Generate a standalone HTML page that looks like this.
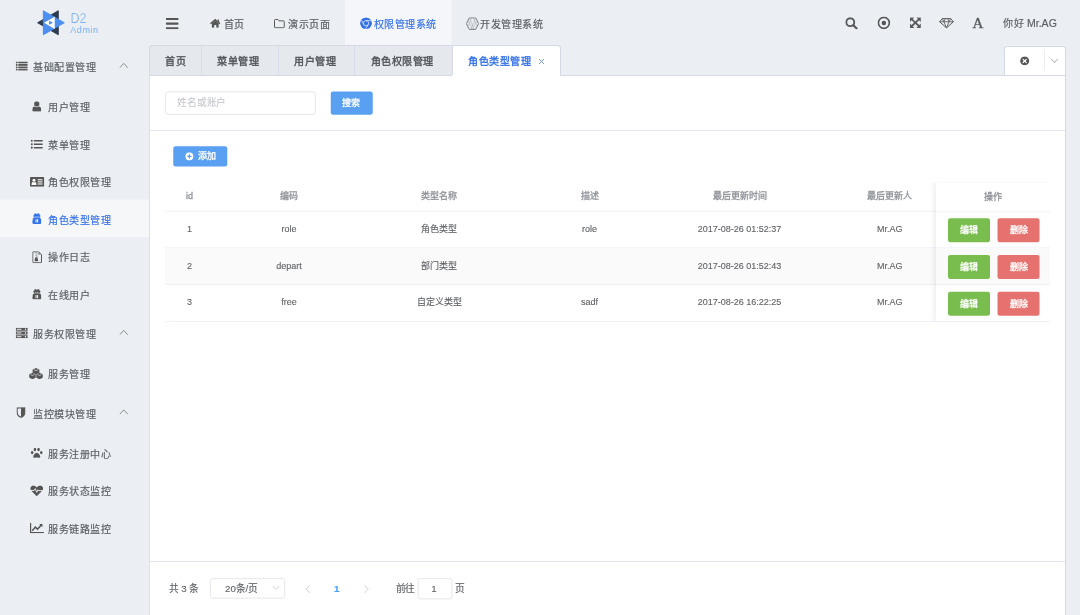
<!DOCTYPE html>
<html lang="zh-CN"><head><meta charset="utf-8">
<style>
html,body{margin:0;padding:0;width:1080px;height:615px;overflow:hidden;background:#ebeff3;}
#root{position:absolute;left:0;top:0;width:1440px;height:820px;transform:scale(0.75);transform-origin:0 0;font-family:"Liberation Sans",sans-serif;color:#606266;background:#ebeff3;filter:grayscale(0.001);}
.abs{position:absolute;}
.c{font-size:calc(1em - 0.6px);letter-spacing:1px;}
.th .c,.td .c,.btn .c,.t14 .c{font-size:1em;letter-spacing:0;}
.t14{-webkit-text-stroke-width:0.15px;font-size:14px;line-height:20px;white-space:nowrap;}
.t12{font-size:12px;line-height:16px;white-space:nowrap;}
.ic{position:absolute;}
/* sidebar */
.mi{position:absolute;left:0;width:200px;height:50px;}
.mi .tx{-webkit-text-stroke-width:0.22px;position:absolute;left:64.5px;top:17.3px;font-size:14px;line-height:20px;white-space:nowrap;color:#5b6066;}
.st{position:absolute;left:0;width:200px;height:56px;}
.st .tx{-webkit-text-stroke-width:0.22px;position:absolute;left:44.4px;top:20.3px;font-size:14px;line-height:20px;white-space:nowrap;color:#5b6066;}
.chev{position:absolute;left:159px;width:12px;height:8px;}
/* header */
.hn{-webkit-text-stroke-width:0.22px;position:absolute;top:22.4px;font-size:14px;line-height:20px;white-space:nowrap;color:#5b6066;}
/* tabs */
.tab{-webkit-text-stroke-width:0.5px;position:absolute;top:60.5px;height:40px;box-sizing:border-box;background:#e5e8ec;font-size:14px;line-height:39px;padding-top:1.5px;text-align:center;color:#4f5359;}
/* panel */
#panel{position:absolute;left:200px;top:100.4px;width:1221px;height:730px;background:#fff;}
.btn{-webkit-text-stroke-width:0.4px;position:absolute;box-sizing:border-box;border-radius:3px;color:#fff;font-size:12px;text-align:center;}
.th{-webkit-text-stroke-width:0.4px;position:absolute;top:252.8px;font-size:12px;line-height:16px;color:#8f9399;white-space:nowrap;transform:translateX(-50%);}
.td{-webkit-text-stroke-width:0.15px;position:absolute;font-size:12px;line-height:16px;color:#5f6266;white-space:nowrap;transform:translateX(-50%);}
.row{position:absolute;left:220px;width:1180px;height:49px;box-sizing:border-box;border-bottom:1px solid #ebeef5;}
</style></head>
<body>
<div id="root">

<!-- ============ HEADER ============ -->
<!-- logo -->
<svg class="ic" style="left:49.33px;top:12.67px" width="40" height="36" viewBox="37 9.5 30 27">
  <path d="M37.9 22.5 L58.5 10.5 L58.5 34.5 Z" fill="#2f3b4f" stroke="#2f3b4f" stroke-width="1" stroke-linejoin="round"/>
  <path d="M43.6 10.5 L64.5 22.5 L43.6 34.5 Z" fill="#4d8ff0" stroke="#4d8ff0" stroke-width="1" stroke-linejoin="round"/>
  <path d="M44.3 22.5 L55 16.4 L55 28.7 Z" fill="#fff"/>
  <path d="M49.3 20.6 L53.3 22.5 L49.3 24.5 Z" fill="#4d8ff0"/>
</svg>
<div class="abs" style="left:94px;top:14.5px;font-size:19.3px;line-height:20px;color:#4d95f2;transform:scaleX(0.87);transform-origin:0 0;-webkit-text-stroke:0.6px #ebeff3">D2</div>
<div class="abs" style="left:93.6px;top:33px;font-size:12.1px;line-height:14px;color:#5b9ef2;letter-spacing:0.75px;-webkit-text-stroke:0.15px #ebeff3">Admin</div>

<!-- hamburger -->
<svg class="ic" style="left:220.5px;top:24px" width="17.5" height="15" viewBox="0 0 17.5 15">
  <rect x="0" y="0" width="17.5" height="2.8" rx="1" fill="#555"/>
  <rect x="0" y="6.1" width="17.5" height="2.8" rx="1" fill="#555"/>
  <rect x="0" y="12.2" width="17.5" height="2.8" rx="1" fill="#555"/>
</svg>
<!-- home -->
<svg class="ic" style="left:279.5px;top:25px" width="14" height="12" viewBox="0 0 14 12">
  <path d="M7 0 L14 6 L12.6 7.4 L7 2.6 L1.4 7.4 L0 6 Z" fill="#555"/>
  <path d="M2.5 6.3 L7 2.6 L11.5 6.3 V12 H8.4 V8.3 H5.6 V12 H2.5 Z" fill="#555"/>
  <rect x="10.3" y="1" width="1.8" height="3" fill="#555"/>
</svg>
<div class="hn" style="left:298.3px"><span class="c">首页</span></div>
<!-- folder -->
<svg class="ic" style="left:365px;top:24.5px" width="15" height="13" viewBox="0 0 15 13">
  <path d="M1 2 Q1 1 2 1 H5.5 L7 2.8 H13 Q14 2.8 14 3.8 V11 Q14 12 13 12 H2 Q1 12 1 11 Z" fill="none" stroke="#555" stroke-width="1.3"/>
</svg>
<div class="hn" style="left:384px"><span class="c">演示页面</span></div>
<!-- active nav -->
<div class="abs" style="left:460px;top:0;width:142px;height:60px;background:#f4f6f9"></div>
<svg class="ic" style="left:479.7px;top:22.9px" width="16" height="16" viewBox="0 0 16 16">
  <circle cx="8" cy="8" r="7.8" fill="#3572e8"/>
  <circle cx="8" cy="8" r="3.4" fill="none" stroke="#fff" stroke-width="1"/>
  <circle cx="8" cy="8" r="2.6" fill="#3572e8"/>
  <path d="M8 4.6 H14.6 M5.1 9.7 L1.8 4 M10.9 9.7 L7.6 15.4" stroke="#fff" stroke-width="0.9" fill="none"/>
</svg>
<div class="hn" style="left:498px;color:#3572e8"><span class="c">权限管理系统</span></div>
<!-- develop -->
<svg class="ic" style="left:621.3px;top:22.6px" width="18" height="17" viewBox="0 0 18 17">
  <path d="M0.8 8.5 L4.8 0.8 H13.2 L17.2 8.5 L13.2 16.2 H4.8 Z" fill="none" stroke="#6e7175" stroke-width="1.2" stroke-linejoin="round"/>
  <path d="M4.8 0.8 L11.2 16.2 M13.2 0.8 L6.8 16.2 M8 0.8 L2.8 12.3 M10 0.8 L15.2 12.3 M2.8 4.7 L9 16.2 M15.2 4.7 L9 16.2" stroke="#9a9da1" stroke-width="0.6" fill="none"/>
</svg>
<div class="hn" style="left:640.1px"><span class="c">开发管理系统</span></div>

<!-- right icons -->
<svg class="ic" style="left:1127px;top:22.5px" width="17" height="16" viewBox="0 0 17 16">
  <circle cx="6.7" cy="6.6" r="5.3" fill="none" stroke="#58595c" stroke-width="2.5"/>
  <path d="M10.6 10.5 L15.2 14.9" stroke="#58595c" stroke-width="2.8" stroke-linecap="round"/>
</svg>
<svg class="ic" style="left:1170px;top:21.5px" width="17" height="17" viewBox="0 0 17 17">
  <circle cx="8.5" cy="8.5" r="7.3" fill="none" stroke="#555" stroke-width="2.2"/>
  <circle cx="8.5" cy="8.5" r="3" fill="#555"/>
</svg>
<svg class="ic" style="left:1212.5px;top:23px" width="15" height="14.5" viewBox="0 0 15 14.5">
  <path d="M0.3 0.3 H6.2 L0.3 6.2 Z M14.7 0.3 V6.2 L8.8 0.3 Z M14.7 14.2 H8.8 L14.7 8.3 Z M0.3 14.2 V8.3 L6.2 14.2 Z" fill="#58595c"/>
  <path d="M2.5 2.5 L12.5 12 M12.5 2.5 L2.5 12" stroke="#58595c" stroke-width="2.3"/>
</svg>
<svg class="ic" style="left:1252px;top:23.5px" width="20" height="14" viewBox="0 0 20 14">
  <path d="M4.5 0.8 H15.5 L19.2 5 L10 13.2 L0.8 5 Z" fill="none" stroke="#555" stroke-width="1.3" stroke-linejoin="round"/>
  <path d="M0.8 5 H19.2 M6.5 5 L10 13 L13.5 5 M4.5 0.8 L6.5 5 L8.5 0.8 M11.5 0.8 L13.5 5 L15.5 0.8" fill="none" stroke="#555" stroke-width="1.1"/>
</svg>
<div class="abs" style="left:1296.5px;top:19.2px;font-family:'Liberation Serif',serif;font-size:20px;line-height:22px;color:#58595c;-webkit-text-stroke:0.5px #58595c">A</div>
<div class="hn" style="left:1337.5px;top:21px"><span class="c">你好</span> Mr.AG</div>

<!-- ============ SIDEBAR ============ -->
<div class="st" style="top:60px">
  <svg class="ic" style="left:21px;top:21.5px" width="16" height="12.5" viewBox="0 0 16 12.5">
    <rect x="0" y="0" width="2.4" height="2.4" fill="#555"/><rect x="3.4" y="0" width="12.6" height="2.4" fill="#555"/>
    <rect x="0" y="3.37" width="2.4" height="2.4" fill="#555"/><rect x="3.4" y="3.37" width="12.6" height="2.4" fill="#555"/>
    <rect x="0" y="6.74" width="2.4" height="2.4" fill="#555"/><rect x="3.4" y="6.74" width="12.6" height="2.4" fill="#555"/>
    <rect x="0" y="10.1" width="2.4" height="2.4" fill="#555"/><rect x="3.4" y="10.1" width="12.6" height="2.4" fill="#555"/>
  </svg>
  <div class="tx"><span class="c">基础配置管理</span></div>
  <svg class="chev" style="top:23px" viewBox="0 0 12 8"><path d="M0.7 7.3 L6 1.5 L11.3 7.3" fill="none" stroke="#777" stroke-width="1.1"/></svg>
</div>
<div class="mi" style="top:116px">
  <svg class="ic" style="left:43px;top:19px" width="12" height="14" viewBox="0 0 12 14">
    <circle cx="6" cy="3.6" r="3.5" fill="#555"/>
    <path d="M0 12.2 Q0 7.6 2.4 7 Q6 9.2 9.6 7 Q12 7.6 12 12.2 Q12 13.6 10.6 13.6 H1.4 Q0 13.6 0 12.2 Z" fill="#555"/>
  </svg>
  <div class="tx"><span class="c">用户管理</span></div>
</div>
<div class="mi" style="top:166px">
  <svg class="ic" style="left:41.2px;top:20px" width="16.3" height="12.5" viewBox="0 0 16.3 12.5">
    <circle cx="1.3" cy="1.6" r="1.4" fill="#555"/><rect x="4" y="0.6" width="12.3" height="2" rx="0.5" fill="#555"/>
    <circle cx="1.3" cy="6.25" r="1.4" fill="#555"/><rect x="4" y="5.25" width="12.3" height="2" rx="0.5" fill="#555"/>
    <circle cx="1.3" cy="10.9" r="1.4" fill="#555"/><rect x="4" y="9.9" width="12.3" height="2" rx="0.5" fill="#555"/>
  </svg>
  <div class="tx"><span class="c">菜单管理</span></div>
</div>
<div class="mi" style="top:216px">
  <svg class="ic" style="left:40px;top:19.5px" width="19" height="13" viewBox="0 0 19 13">
    <rect x="0" y="0" width="19" height="13" rx="1" fill="#555"/>
    <circle cx="5.3" cy="4.3" r="2" fill="#fff"/>
    <path d="M2 10.5 Q2 7 3.6 6.8 Q5.3 7.8 7 6.8 Q8.6 7 8.6 10.5 Z" fill="#fff"/>
    <rect x="10.2" y="3" width="6.5" height="1.4" fill="#fff"/><rect x="10.2" y="5.8" width="6.5" height="1.4" fill="#fff"/><rect x="10.2" y="8.6" width="6.5" height="1.4" fill="#fff"/>
  </svg>
  <div class="tx"><span class="c">角色权限管理</span></div>
</div>
<div class="mi" style="top:266px;background:#f5f7f9">
  <svg class="ic" style="left:42.5px;top:18.3px" width="12.4" height="14.8" viewBox="0 0 12.4 14.8">
    <path d="M1.7 4.4 L2.8 1.5 Q3.2 0 4.6 0.6 L6.2 1.2 L7.8 0.6 Q9.2 0 9.6 1.5 L10.7 4.4 Z" fill="#3572e8"/>
    <rect x="1.2" y="3.3" width="10" height="1.3" rx="0.6" fill="#3572e8"/>
    <rect x="2.4" y="4.4" width="7.6" height="1.8" fill="#3572e8"/>
    <ellipse cx="4.9" cy="5.2" rx="0.95" ry="0.6" fill="#fff"/><ellipse cx="7.5" cy="5.2" rx="0.95" ry="0.6" fill="#fff"/>
    <path d="M1.8 6.2 H10.6 Q12.4 7.6 12.4 12.3 Q12.4 14.8 9.9 14.8 H2.5 Q0 14.8 0 12.3 Q0 7.6 1.8 6.2 Z" fill="#3572e8"/>
    <rect x="4.4" y="8.4" width="1.3" height="4.2" fill="#fff"/><rect x="6.5" y="8.4" width="1.3" height="4.2" fill="#fff"/>
  </svg>
  <div class="tx" style="color:#3572e8"><span class="c">角色类型管理</span></div>
</div>
<div class="mi" style="top:316px">
  <svg class="ic" style="left:42.5px;top:18.8px" width="13" height="16" viewBox="0 0 13 16">
    <path d="M1.2 0.7 H8.6 L12.3 4.4 V14.6 Q12.3 15.3 11.6 15.3 H1.4 Q0.7 15.3 0.7 14.6 V1.4 Q0.7 0.7 1.4 0.7 Z" fill="none" stroke="#555" stroke-width="1.3"/>
    <path d="M8.3 1.6 L11.2 4.4 H8.3 Z" fill="#555"/>
    <rect x="4.3" y="1.5" width="1.6" height="1.4" fill="#888"/><rect x="5.6" y="3.0" width="1.4" height="1.4" fill="#888"/><rect x="4.3" y="4.5" width="1.6" height="1.4" fill="#888"/><rect x="5.6" y="6.0" width="1.4" height="1.4" fill="#888"/>
    <path d="M4.2 8 H6.8 L7.9 12.4 Q7.9 13.4 6.9 13.4 H4 Q3 13.4 3 12.4 Z" fill="#555"/>
  </svg>
  <div class="tx"><span class="c">操作日志</span></div>
</div>
<div class="mi" style="top:366px">
  <svg class="ic" style="left:42.5px;top:18.7px" width="12.4" height="14.8" viewBox="0 0 12.4 14.8">
    <path d="M1.7 4.4 L2.8 1.5 Q3.2 0 4.6 0.6 L6.2 1.2 L7.8 0.6 Q9.2 0 9.6 1.5 L10.7 4.4 Z" fill="#555"/>
    <rect x="1.2" y="3.3" width="10" height="1.3" rx="0.6" fill="#555"/>
    <rect x="2.4" y="4.4" width="7.6" height="1.8" fill="#555"/>
    <ellipse cx="4.9" cy="5.2" rx="0.95" ry="0.6" fill="#fff"/><ellipse cx="7.5" cy="5.2" rx="0.95" ry="0.6" fill="#fff"/>
    <path d="M1.8 6.2 H10.6 Q12.4 7.6 12.4 12.3 Q12.4 14.8 9.9 14.8 H2.5 Q0 14.8 0 12.3 Q0 7.6 1.8 6.2 Z" fill="#555"/>
    <rect x="4.4" y="8.4" width="1.3" height="4.2" fill="#fff"/><rect x="6.5" y="8.4" width="1.3" height="4.2" fill="#fff"/>
  </svg>
  <div class="tx"><span class="c">在线用户</span></div>
</div>
<div class="st" style="top:416px">
  <svg class="ic" style="left:20.5px;top:21px" width="16" height="14" viewBox="0 0 16 14">
    <rect x="0" y="0" width="16" height="4" fill="#555"/><rect x="0" y="5" width="16" height="4" fill="#555"/><rect x="0" y="10" width="16" height="4" fill="#555"/>
    <rect x="1.5" y="1.4" width="6" height="1.2" fill="#fff"/><rect x="1.5" y="6.4" width="6" height="1.2" fill="#fff"/><rect x="1.5" y="11.4" width="6" height="1.2" fill="#fff"/>
    <circle cx="13" cy="2" r="0.9" fill="#fff"/><circle cx="13" cy="7" r="0.9" fill="#fff"/><circle cx="13" cy="12" r="0.9" fill="#fff"/>
  </svg>
  <div class="tx"><span class="c">服务权限管理</span></div>
  <svg class="chev" style="top:23px" viewBox="0 0 12 8"><path d="M0.7 7.3 L6 1.5 L11.3 7.3" fill="none" stroke="#777" stroke-width="1.1"/></svg>
</div>
<div class="mi" style="top:472px">
  <svg class="ic" style="left:38.2px;top:18px" width="20" height="16" viewBox="0 0 20 16">
    <path d="M10 0.5 L14.5 2.5 V7 L10 9 L5.5 7 V2.5 Z" fill="#555"/>
    <path d="M5.3 7 L9.6 9 V13.5 L5.3 15.5 L1 13.5 V9 Z" fill="#555"/>
    <path d="M14.7 7 L19 9 V13.5 L14.7 15.5 L10.4 13.5 V9 Z" fill="#555"/>
    <path d="M7 2.8 L10 4.2 L13 2.8 M2.5 9.3 L5.3 10.6 L8.1 9.3 M11.9 9.3 L14.7 10.6 L17.5 9.3" stroke="#fff" stroke-width="0.8" fill="none"/>
  </svg>
  <div class="tx"><span class="c">服务管理</span></div>
</div>
<div class="st" style="top:522px">
  <svg class="ic" style="left:22px;top:20.5px" width="12" height="14" viewBox="0 0 12 14">
    <path d="M0.8 0.8 H11.2 V6.5 Q11.2 11 6 13.5 Q0.8 11 0.8 6.5 Z" fill="none" stroke="#555" stroke-width="1.6"/>
    <path d="M6 0.8 H11.2 V6.5 Q11.2 11 6 13.5 Z" fill="#555"/>
  </svg>
  <div class="tx"><span class="c">监控模块管理</span></div>
  <svg class="chev" style="top:23px" viewBox="0 0 12 8"><path d="M0.7 7.3 L6 1.5 L11.3 7.3" fill="none" stroke="#777" stroke-width="1.1"/></svg>
</div>
<div class="mi" style="top:578px">
  <svg class="ic" style="left:41px;top:19px" width="16" height="14" viewBox="0 0 16 14">
    <ellipse cx="5.6" cy="2.4" rx="1.7" ry="2.3" fill="#555"/><ellipse cx="10.4" cy="2.4" rx="1.7" ry="2.3" fill="#555"/>
    <ellipse cx="1.9" cy="6.4" rx="1.7" ry="2.1" fill="#555"/><ellipse cx="14.1" cy="6.4" rx="1.7" ry="2.1" fill="#555"/>
    <path d="M8 6.8 Q10.5 6.8 12.3 10.2 Q13.5 13.5 10.8 13.3 Q8 12.6 5.2 13.3 Q2.5 13.5 3.7 10.2 Q5.5 6.8 8 6.8 Z" fill="#555"/>
  </svg>
  <div class="tx"><span class="c">服务注册中心</span></div>
</div>
<div class="mi" style="top:628px">
  <svg class="ic" style="left:40px;top:19px" width="18" height="15" viewBox="0 0 18 15">
    <path d="M9 14.5 L2 7.8 Q-0.5 5 1.2 2.2 Q3.5 -0.8 6.8 1 Q8.2 1.8 9 3 Q9.8 1.8 11.2 1 Q14.5 -0.8 16.8 2.2 Q18.5 5 16 7.8 Z" fill="#555"/>
    <path d="M0.5 7 H5.5 L7 4.5 L9 9.5 L10.5 6 L11.5 7.2 H17.5" fill="none" stroke="#fff" stroke-width="1.1"/>
  </svg>
  <div class="tx"><span class="c">服务状态监控</span></div>
</div>
<div class="mi" style="top:678px">
  <svg class="ic" style="left:40.2px;top:19px" width="18.5" height="14" viewBox="0 0 18.5 14">
    <path d="M0.8 0 V13.1 H18.5" fill="none" stroke="#555" stroke-width="1.6"/>
    <path d="M3 10.6 L7 5.8 L10 8.5 L15.2 3" fill="none" stroke="#555" stroke-width="2"/>
    <path d="M12.3 1.7 H16.6 V6 Z" fill="#555"/>
  </svg>
  <div class="tx"><span class="c">服务链路监控</span></div>
</div>

<!-- ============ TABS ============ -->
<div class="tab" style="left:200px;width:69.2px;"><span class="c">首页</span></div>
<div class="tab" style="left:269.2px;width:102.6px;padding-right:5px;"><span class="c">菜单管理</span></div>
<div class="tab" style="left:371.8px;width:101.5px;padding-right:5px;"><span class="c">用户管理</span></div>
<div class="tab" style="left:473.3px;width:130.8px;padding-right:5px;"><span class="c">角色权限管理</span></div>
<div class="tab" style="left:603.6px;width:143.2px;background:#fff;height:41px;z-index:2;color:#3572e8;text-align:left;padding-left:20.5px;"><span class="c">角色类型管理</span><svg style="position:absolute;left:114.2px;top:17px" width="8" height="8" viewBox="0 0 8 8"><path d="M0.6 0.6 L7.4 7.4 M7.4 0.6 L0.6 7.4" stroke="#6f98e4" stroke-width="1.3"/></svg></div>

<!-- tab control -->
<div class="abs" style="left:1339.5px;top:61px;width:81.3px;height:40px;box-sizing:border-box;background:#fff;z-index:3">
  <svg class="ic" style="left:20.6px;top:13.6px" width="12.5" height="12.5" viewBox="0 0 13 13">
    <circle cx="6.5" cy="6.5" r="6.2" fill="#555"/>
    <path d="M4.3 4.3 L8.7 8.7 M8.7 4.3 L4.3 8.7" stroke="#fff" stroke-width="1.6" stroke-linecap="round"/>
  </svg>
  <div class="abs" style="left:52.9px;top:6px;width:1px;height:27px;background:#e4e7ed"></div>
  <svg class="ic" style="left:61.9px;top:16.8px" width="10" height="6" viewBox="0 0 10 6"><path d="M0.5 0.5 L5 5.2 L9.5 0.5" fill="none" stroke="#888" stroke-width="1"/></svg>
</div>

<!-- ============ PANEL ============ -->
<div id="panel"></div>
<!-- search input -->
<div class="abs" style="left:220px;top:121.5px;width:200.7px;height:31.7px;box-sizing:border-box;border:1px solid #dcdfe6;border-radius:4px;"></div>
<div class="abs t14" style="left:236.5px;top:126.5px;font-size:13px;color:#c0c3ca;-webkit-text-stroke-width:0"><span class="c">姓名或账户</span></div>
<div class="btn" style="left:440.5px;top:121.5px;width:56px;height:31.7px;background:#5aa0f2;line-height:31.7px;"><span class="c">搜索</span></div>

<!-- add button -->
<div class="btn" style="left:230.5px;top:194.7px;width:72.5px;height:27.2px;background:#5aa0f2;line-height:27.2px;">
  <svg class="ic" style="left:16.5px;top:8px" width="11" height="11" viewBox="0 0 11 11"><circle cx="5.5" cy="5.5" r="5.5" fill="#fff"/><path d="M5.5 2.6 V8.4 M2.6 5.5 H8.4" stroke="#5aa0f2" stroke-width="1.6"/></svg>
  <span style="position:absolute;left:33px;top:0"><span class="c">添加</span></span>
</div>

<!-- table -->
<div class="row" style="top:243.3px;height:39px;border-bottom:1px solid #ebeef5"></div>
<div class="row" style="top:282.3px;"></div>
<div class="row" style="top:331.3px;background:#fafafa"></div>
<div class="row" style="top:380.3px;"></div>

<div class="th" style="left:252.7px">id</div>
<div class="th" style="left:385.3px"><span class="c">编码</span></div>
<div class="th" style="left:585.9px"><span class="c">类型名称</span></div>
<div class="th" style="left:786px"><span class="c">描述</span></div>
<div class="th" style="left:986.1px"><span class="c">最后更新时间</span></div>
<div class="th" style="left:1186.5px"><span class="c">最后更新人</span></div>

<div class="td" style="left:252.7px;top:297.3px">1</div>
<div class="td" style="left:385.3px;top:297.3px">role</div>
<div class="td" style="left:585.9px;top:297.3px"><span class="c">角色类型</span></div>
<div class="td" style="left:786px;top:297.3px">role</div>
<div class="td" style="left:986.1px;top:297.3px">2017-08-26 01:52:37</div>
<div class="td" style="left:1186.5px;top:297.3px">Mr.AG</div>

<div class="td" style="left:252.7px;top:346.3px">2</div>
<div class="td" style="left:385.3px;top:346.3px">depart</div>
<div class="td" style="left:585.9px;top:346.3px"><span class="c">部门类型</span></div>
<div class="td" style="left:986.1px;top:346.3px">2017-08-26 01:52:43</div>
<div class="td" style="left:1186.5px;top:346.3px">Mr.AG</div>

<div class="td" style="left:252.7px;top:395.3px">3</div>
<div class="td" style="left:385.3px;top:395.3px">free</div>
<div class="td" style="left:585.9px;top:395.3px"><span class="c">自定义类型</span></div>
<div class="td" style="left:786px;top:395.3px">sadf</div>
<div class="td" style="left:986.1px;top:395.3px">2017-08-26 16:22:25</div>
<div class="td" style="left:1186.5px;top:395.3px">Mr.AG</div>

<!-- fixed right column -->
<div class="abs" style="left:1248px;top:243.3px;width:152px;height:185.7px;background:#fff;box-shadow:0 0 10px rgba(0,0,0,.12);clip-path:inset(0 0 0 -12px);">
  <div class="abs" style="left:0;top:0;width:152px;height:39px;border-bottom:1px solid #ebeef5"></div>
  <div class="abs" style="left:0;top:39px;width:152px;height:48px;border-bottom:1px solid #ebeef5"></div>
  <div class="abs" style="left:0;top:88px;width:152px;height:48px;border-bottom:1px solid #ebeef5;background:#fafafa"></div>
  <div class="abs" style="left:0;top:137px;width:152px;height:48px;border-bottom:1px solid #ebeef5"></div>
  <div class="th" style="left:76px;top:11.2px"><span class="c">操作</span></div>
  <div class="btn" style="left:16px;top:47.5px;width:56px;height:32px;line-height:32px;background:#79bd4e"><span class="c">编辑</span></div>
  <div class="btn" style="left:82px;top:47.5px;width:56px;height:32px;line-height:32px;background:#e5726e"><span class="c">删除</span></div>
  <div class="btn" style="left:16px;top:96.5px;width:56px;height:32px;line-height:32px;background:#79bd4e"><span class="c">编辑</span></div>
  <div class="btn" style="left:82px;top:96.5px;width:56px;height:32px;line-height:32px;background:#e5726e"><span class="c">删除</span></div>
  <div class="btn" style="left:16px;top:145.5px;width:56px;height:32px;line-height:32px;background:#79bd4e"><span class="c">编辑</span></div>
  <div class="btn" style="left:82px;top:145.5px;width:56px;height:32px;line-height:32px;background:#e5726e"><span class="c">删除</span></div>
</div>

<!-- footer -->
<div class="abs t14" style="left:225px;top:775px;font-size:13px;color:#5f6266"><span class="c">共</span> 3 <span class="c">条</span></div>
<div class="abs" style="left:279.8px;top:771px;width:100px;height:27px;box-sizing:border-box;border:1px solid #dcdfe6;border-radius:3px"></div>
<div class="abs t14" style="left:300px;top:775px;font-size:13px;color:#5f6266">20<span class="c">条</span>/<span class="c">页</span></div>
<svg class="ic" style="left:363px;top:781px" width="10" height="6" viewBox="0 0 10 6"><path d="M0.5 0.5 L5 5 L9.5 0.5" fill="none" stroke="#c0c4cc" stroke-width="1"/></svg>
<svg class="ic" style="left:407px;top:779.5px" width="7" height="11" viewBox="0 0 7 11"><path d="M6 0.5 L1 5.5 L6 10.5" fill="none" stroke="#c0c4cc" stroke-width="1.1"/></svg>
<div class="abs t14" style="left:445.3px;top:775px;font-size:13px;font-weight:bold;color:#409eff">1</div>
<svg class="ic" style="left:484.5px;top:779.5px" width="7" height="11" viewBox="0 0 7 11"><path d="M1 0.5 L6 5.5 L1 10.5" fill="none" stroke="#c0c4cc" stroke-width="1.1"/></svg>
<div class="abs t14" style="left:527.5px;top:775px;font-size:13px;color:#5f6266"><span class="c">前往</span></div>
<div class="abs" style="left:557px;top:771px;width:45.5px;height:27.5px;box-sizing:border-box;border:1px solid #dcdfe6;border-radius:3px"></div>
<div class="abs t14" style="left:575px;top:775px;font-size:13px;color:#5f6266">1</div>
<div class="abs t14" style="left:607px;top:775px;font-size:13px;color:#5f6266"><span class="c">页</span></div>

</div>
<!-- ============ OVERLAY LINES (1080 space) ============ -->
<div id="ov" style="position:absolute;left:0;top:0;width:1080px;height:615px;pointer-events:none">
  <div class="abs" style="left:149px;top:45px;width:412px;height:31px;box-sizing:border-box;border:1px solid #d5d9e6;border-bottom:none;border-radius:3px 3px 0 0"></div>
  <div class="abs" style="left:201px;top:46px;width:1px;height:29px;background:#d8dce8"></div>
  <div class="abs" style="left:278px;top:46px;width:1px;height:29px;background:#d8dce8"></div>
  <div class="abs" style="left:354px;top:46px;width:1px;height:29px;background:#d8dce8"></div>
  <div class="abs" style="left:452px;top:46px;width:1px;height:29px;background:#d5d9e6"></div>
  <div class="abs" style="left:149px;top:75px;width:303px;height:1px;background:#d5d9e6"></div>
  <div class="abs" style="left:560px;top:75px;width:506px;height:1px;background:#d5d9e6"></div>
  <div class="abs" style="left:1004px;top:46px;width:62px;height:30px;box-sizing:border-box;border:1px solid #d5d9e6;border-bottom:none;border-radius:3px 3px 0 0"></div>
  <div class="abs" style="left:149px;top:76px;width:1px;height:539px;background:#dde1e6"></div>
  <div class="abs" style="left:1065px;top:76px;width:1px;height:539px;background:#d5d9e6"></div>
  <div class="abs" style="left:150px;top:130px;width:915px;height:1px;background:#e2e5ee"></div>
  <div class="abs" style="left:150px;top:561px;width:915px;height:1px;background:#e2e5ee"></div>
</div>
</body></html>
